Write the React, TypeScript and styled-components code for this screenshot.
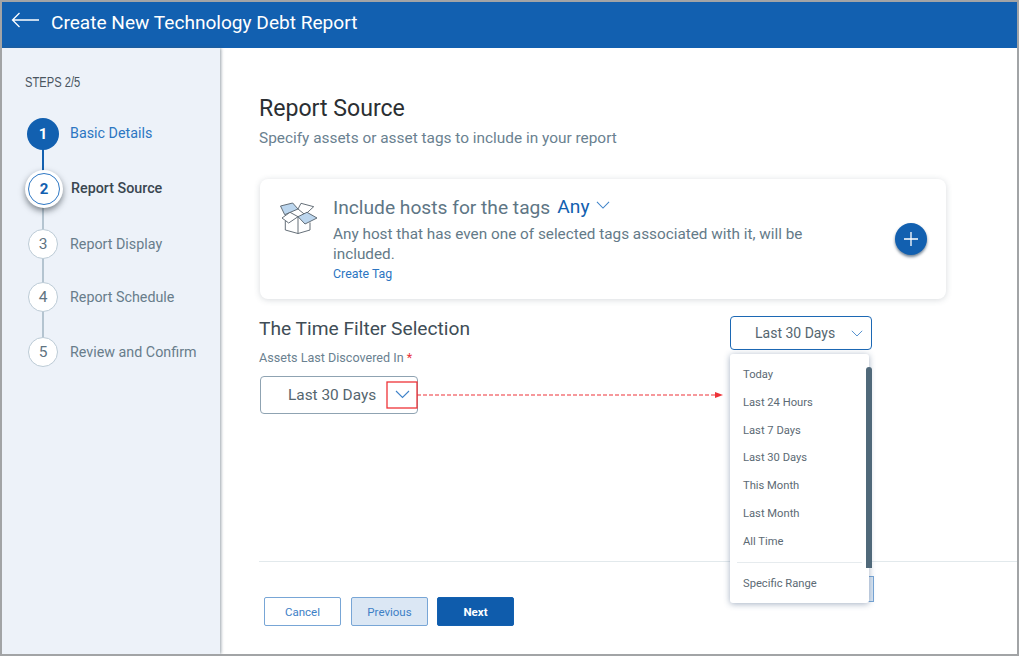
import React from "react";
import styled, { createGlobalStyle } from "styled-components";

const Global = createGlobalStyle`
  html, body { margin: 0; padding: 0; background: #fff; }
  body { font-family: Roboto, "Liberation Sans", sans-serif; }
  * { box-sizing: border-box; }
`;

const Frame = styled.div`
  position: relative;
  width: 1019px;
  height: 656px;
  border: 2px solid #a2a4a6;
  display: flex;
  flex-direction: column;
  overflow: hidden;
  background: #fff;
`;
const Header = styled.header`
  height: 46px;
  flex: none;
  background: #1260b0;
  display: flex;
  align-items: center;
  padding: 0 0 5px 9px;
  gap: 11px;
  color: #fff;
`;
const BackIcon = styled.svg`
  margin-top: -5px;
`;
const HeaderTitle = styled.h1`
  margin: 0;
  font-size: 19.1px;
  font-weight: 400;
  line-height: 24px;
`;
const Body = styled.div`
  flex: 1;
  display: flex;
  min-height: 0;
`;
const Sidebar = styled.aside`
  width: 218px;
  flex: none;
  background: #edf2f9;
  box-shadow: 1px 0 3px rgba(70, 85, 100, 0.55);
  padding: 25px 0 0 23px;
  z-index: 1;
`;
const StepsLabel = styled.div`
  font-family: "Liberation Sans", sans-serif;
  font-size: 15.5px;
  transform: scaleX(0.72);
  transform-origin: left;
  color: #4a5560;
  line-height: 18px;
  margin-bottom: 27px;
  white-space: nowrap;
`;
const StepList = styled.ol`
  list-style: none;
  margin: 0;
  padding: 0;
`;
const Step = styled.li<{ $height: number }>`
  position: relative;
  height: ${(p) => p.$height}px;
  display: flex;
  align-items: flex-start;
`;
const CircleSlot = styled.div`
  width: 36px;
  flex: none;
  display: flex;
  justify-content: center;
  position: relative;
`;
const Connector = styled.span<{ $active?: boolean; $top: number; $height: number }>`
  position: absolute;
  left: 17px;
  top: ${(p) => p.$top}px;
  height: ${(p) => p.$height}px;
  width: 2px;
  background: ${(p) => (p.$active ? "#1260b0" : "#b4c4d0")};
`;
const Circle = styled.div<{ $kind: "done" | "current" | "todo" }>`
  position: relative;
  z-index: 1;
  flex: none;
  border-radius: 50%;
  display: flex;
  align-items: center;
  justify-content: center;
  font-size: ${(p) => (p.$kind === "todo" ? 15.5 : 15)}px;
  font-weight: ${(p) => (p.$kind === "todo" ? 400 : 700)};
  ${(p) =>
    p.$kind === "done"
      ? "width:32px;height:32px;background:#1260b0;color:#fff;"
      : p.$kind === "current"
      ? "width:38px;height:38px;margin-left:2px;background:#fff;color:#1260b0;box-shadow:0 3px 6px rgba(30,40,50,.55);"
      : "width:30px;height:30px;background:#fff;color:#5f7482;border:1px solid #bccbd6;"}
`;
const InnerRing = styled.span`
  width: 32px;
  height: 32px;
  border-radius: 50%;
  border: 1px solid #2f78c4;
  display: flex;
  align-items: center;
  justify-content: center;
`;
const StepText = styled.span<{ $kind: "done" | "current" | "todo"; $top: number }>`
  margin: ${(p) => p.$top}px 0 0 ${(p) => (p.$kind === "current" ? 10 : 9)}px;
  font-size: 14.3px;
  line-height: 18px;
  white-space: nowrap;
  color: ${(p) => (p.$kind === "done" ? "#2c76c2" : p.$kind === "current" ? "#3a4650" : "#687d8b")};
  font-weight: ${(p) => (p.$kind === "current" ? 500 : 400)};
`;
const Main = styled.main`
  flex: 1;
  min-width: 0;
  display: flex;
  flex-direction: column;
  padding: 47px 0 0 39px;
`;
const Title = styled.h2`
  margin: 0;
  font-size: 23.1px;
  font-weight: 400;
  line-height: 28px;
  color: #2b2f33;
`;
const Subtitle = styled.p`
  margin: 5px 0 0;
  font-size: 15.4px;
  line-height: 20px;
  color: #6a8190;
`;
const Card = styled.section`
  margin: 31px 0 0 1px;
  flex: none;
  width: 686px;
  height: 120px;
  border-radius: 8px;
  background: #fff;
  box-shadow: 0 1px 6px rgba(60, 75, 90, 0.2);
  display: flex;
  padding: 15px 19px 0 20px;
  position: relative;
`;
const BoxIcon = styled.svg`
  flex: none;
  width: 38px;
  height: 34px;
  margin-top: 8px;
`;
const CardText = styled.div`
  margin-left: 15px;
  width: 500px;
`;
const CardTitleRow = styled.div`
  display: flex;
  align-items: center;
  height: 26px;
  gap: 7px;
`;
const CardTitle = styled.span`
  font-size: 19.2px;
  color: #5e7685;
  white-space: nowrap;
`;
const AnyLink = styled.span`
  font-size: 19.2px;
  color: #1260b0;
  margin-top: -2px;
`;
const AnyChevron = styled.span`
  display: flex;
  margin-top: -3px;
`;
const CardDesc = styled.p`
  margin: 4px 0 0;
  font-size: 15.3px;
  line-height: 20px;
  color: #647a88;
`;
const TagLink = styled.a`
  display: block;
  font-size: 12.4px;
  line-height: 16px;
  margin-top: 2px;
  color: #2c76c2;
`;
const AddButton = styled.div`
  position: absolute;
  right: 19px;
  top: 44px;
  width: 32px;
  height: 32px;
  border-radius: 50%;
  background: #1260b0;
  box-shadow: 0 2px 3px rgba(20, 50, 80, 0.6);
  display: flex;
  align-items: center;
  justify-content: center;
`;
const SectionTitle = styled.h3`
  margin: 18px 0 0;
  font-size: 19.2px;
  font-weight: 400;
  line-height: 24px;
  color: #404d56;
`;
const FieldLabel = styled.label`
  display: block;
  margin-top: 9px;
  font-size: 12.6px;
  line-height: 16px;
  color: #6a8190;
`;
const Required = styled.span`
  color: #e8333a;
`;
const Select = styled.div`
  margin: 10px 0 0 1px;
  width: 158px;
  height: 38px;
  border: 1px solid #8fa3b2;
  border-radius: 4px;
  display: flex;
  align-items: center;
  padding-left: 27px;
  font-size: 15.4px;
  color: #55666f;
`;
const Divider = styled.hr`
  margin: 147px 0 0;
  width: 100%;
  border: 0;
  border-top: 1px solid #e2e9ec;
`;
const Actions = styled.div`
  margin: 35px 0 0 5px;
  display: flex;
  gap: 10px;
`;
const Button = styled.button<{ $variant: "outline" | "soft" | "solid" }>`
  width: 77px;
  height: 29px;
  border-radius: 2px;
  padding: 0;
  font-family: inherit;
  font-size: 11.5px;
  font-weight: ${(p) => (p.$variant === "solid" ? 700 : 400)};
  margin-left: ${(p) => (p.$variant === "solid" ? -1 : 0)}px;
  border: 1px solid ${(p) => (p.$variant === "solid" ? "#1260b0" : "#78a6d6")};
  color: ${(p) => (p.$variant === "solid" ? "#fff" : "#3d80c6")};
  background: ${(p) => (p.$variant === "solid" ? "#0f5cac" : p.$variant === "soft" ? "#dbe7f4" : "#fff")};
`;
const OpenSelect = styled.div`
  position: absolute;
  left: 728px;
  top: 314px;
  width: 142px;
  height: 34px;
  border: 1.5px solid #1c68b4;
  border-radius: 4px;
  background: #fff;
  display: flex;
  align-items: center;
  padding-left: 24px;
  font-size: 14px;
  color: #55666f;
  z-index: 3;
`;
const ChevronSlot = styled.span<{ $right: number; $top: number }>`
  position: absolute;
  right: ${(p) => p.$right}px;
  top: ${(p) => p.$top}px;
  display: flex;
`;
const HiddenButton = styled.div`
  position: absolute;
  left: 860px;
  top: 574px;
  width: 12px;
  height: 26px;
  background: #dbe7f4;
  border: 1px solid #78a6d6;
  border-left: 0;
  z-index: 2;
`;
const Menu = styled.ul`
  position: absolute;
  left: 728px;
  top: 352px;
  width: 139px;
  height: 249px;
  margin: 0;
  padding: 7px 0 0;
  list-style: none;
  background: #fff;
  border-radius: 3px;
  box-shadow: 0 1px 6px rgba(50, 80, 120, 0.45);
  z-index: 3;
`;
const MenuItem = styled.li`
  height: 27.8px;
  padding-left: 13px;
  font-size: 11.2px;
  line-height: 27.8px;
  color: #5c6a74;
`;
const MenuDivider = styled.li`
  height: 1px;
  margin: 6px 7px 0;
  background: #e6ebee;
`;
const SpecificItem = styled(MenuItem)`
  margin-top: 7px;
`;
const Scrollbar = styled.div`
  position: absolute;
  left: 864px;
  top: 365px;
  width: 6px;
  height: 201px;
  border-radius: 3px 3px 0 0;
  background: #50697a;
  z-index: 4;
`;
const Annotation = styled.svg`
  position: absolute;
  left: 0;
  top: 0;
  z-index: 2;
  pointer-events: none;
`;

const Chevron = ({ size = 15, color = "#3f83c9" }: { size?: number; color?: string }) => (
  <svg width={size} height={size * 0.6} viewBox="0 0 15 9" fill="none">
    <path d="M1 1l6.5 6.5L14 1" stroke={color} strokeWidth="1.1" />
  </svg>
);

const steps: { n: number; label: string; kind: "done" | "current" | "todo"; h: number }[] = [
  { n: 1, label: "Basic Details", kind: "done", h: 52 },
  { n: 2, label: "Report Source", kind: "current", h: 59 },
  { n: 3, label: "Report Display", kind: "todo", h: 53 },
  { n: 4, label: "Report Schedule", kind: "todo", h: 55 },
  { n: 5, label: "Review and Confirm", kind: "todo", h: 40 },
];

const menu = ["Today", "Last 24 Hours", "Last 7 Days", "Last 30 Days", "This Month", "Last Month", "All Time"];

export default function App() {
  return (
    <>
      <Global />
      <Frame>
        <Header>
          <BackIcon width="29" height="16" viewBox="0 0 29 16" fill="none">
            <path d="M28 8H1.5M8.5 1L1.5 8l7 7" stroke="#fff" strokeWidth="1.3" />
          </BackIcon>
          <HeaderTitle>Create New Technology Debt Report</HeaderTitle>
        </Header>
        <Body>
          <Sidebar>
            <StepsLabel>STEPS 2/5</StepsLabel>
            <StepList>
              {steps.map((s) => (
                <Step key={s.n} $height={s.h}>
                  <CircleSlot>
                    {s.n < 5 && (
                      <Connector
                        $active={s.kind === "done"}
                        $top={s.kind === "current" ? 36 : 28}
                        $height={s.kind === "current" ? 26 : 32}
                      />
                    )}
                    <Circle $kind={s.kind}>
                      {s.kind === "current" ? <InnerRing>{s.n}</InnerRing> : s.n}
                    </Circle>
                  </CircleSlot>
                  <StepText $kind={s.kind} $top={s.kind === "current" ? 9 : 6}>
                    {s.label}
                  </StepText>
                </Step>
              ))}
            </StepList>
          </Sidebar>
          <Main>
            <Title>Report Source</Title>
            <Subtitle>Specify assets or asset tags to include in your report</Subtitle>
            <Card>
              <BoxIcon viewBox="0 0 38 34" fill="none" stroke="#55606a" strokeWidth="0.9">
                <path d="M0.5 4L12.7 1 18 7 4.7 12.7z" fill="#bcd6ee" />
                <path d="M21 1.3L33.7 4.7 25 12.7 18 7z" fill="#fff" />
                <path d="M2 16L10 10.3 18 14.7 8.7 21z" fill="#fff" />
                <path d="M18 14.7L27 10.3 37 16 25 22z" fill="#bcd6ee" />
                <path d="M5.3 19V28L18 31.5 30 28V20.5M18 15V31.5" />
              </BoxIcon>
              <CardText>
                <CardTitleRow>
                  <CardTitle>Include hosts for the tags</CardTitle>
                  <AnyLink>Any</AnyLink>
                  <AnyChevron>
                    <Chevron size={14} />
                  </AnyChevron>
                </CardTitleRow>
                <CardDesc>
                  Any host that has even one of selected tags associated with it, will be included.
                </CardDesc>
                <TagLink>Create Tag</TagLink>
              </CardText>
              <AddButton>
                <svg width="16" height="16" viewBox="0 0 16 16" stroke="#fff" strokeWidth="1.3">
                  <path d="M8 1v14M1 8h14" />
                </svg>
              </AddButton>
            </Card>
            <SectionTitle>The Time Filter Selection</SectionTitle>
            <FieldLabel>
              Assets Last Discovered In <Required>*</Required>
            </FieldLabel>
            <Select>Last 30 Days</Select>
            <Divider />
            <Actions>
              <Button $variant="outline">Cancel</Button>
              <Button $variant="soft">Previous</Button>
              <Button $variant="solid">Next</Button>
            </Actions>
          </Main>
        </Body>

        <ChevronSlot $right={607} $top={388}>
          <Chevron size={15} />
        </ChevronSlot>
        <Annotation width="1015" height="652" fill="none">
          <rect x="385" y="380" width="30" height="26" stroke="#ee3338" strokeWidth="1.3" fill="none" />
          <path d="M415 393H714" stroke="#ee3338" strokeWidth="1.2" strokeDasharray="4 2" />
          <path d="M713 390l8 3-8 3z" fill="#ee3338" />
        </Annotation>
        <OpenSelect>
          Last 30 Days
          <ChevronSlot $right={8} $top={13}>
            <Chevron size={12} />
          </ChevronSlot>
        </OpenSelect>
        <HiddenButton />
        <Menu>
          {menu.map((m) => (
            <MenuItem key={m}>{m}</MenuItem>
          ))}
          <MenuDivider />
          <SpecificItem>Specific Range</SpecificItem>
        </Menu>
        <Scrollbar />
      </Frame>
    </>
  );
}
